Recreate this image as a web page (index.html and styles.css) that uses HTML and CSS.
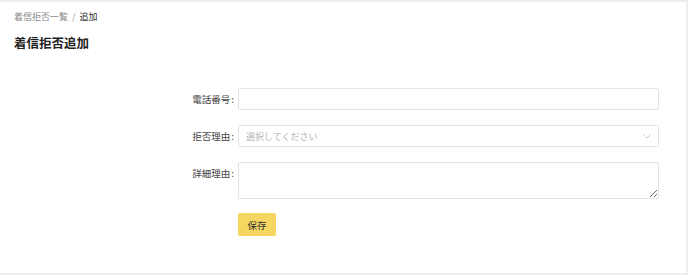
FILE: index.html
```
<!DOCTYPE html>
<html lang="ja">
<head>
    <meta charset="UTF-8">
    <meta name="viewport" content="width=device-width, initial-scale=1.0">
    <title>着信拒否追加</title>
    <link rel="stylesheet" href="styles.css">
</head>
<body>
    <div class="page">
        <div class="breadcrumb">
            <a href="#" class="crumb-link">着信拒否一覧</a>
            <span class="crumb-sep">/</span>
            <span class="crumb-current">追加</span>
        </div>
        <h1 class="page-title">着信拒否追加</h1>

        <form class="block-form">
            <label class="form-label" for="phone">電話番号<span class="colon">:</span></label>
            <input class="form-input" type="text" id="phone" name="phone">

            <label class="form-label" for="reason">拒否理由<span class="colon">:</span></label>
            <div class="select-box">
                <select class="form-input form-select" id="reason" name="reason">
                    <option value="">選択してください</option>
                </select>
                <svg class="select-arrow" width="8" height="5" viewBox="0 0 8 5"><path d="M0.5 0.5 L4 4 L7.5 0.5" fill="none" stroke="#c8c8c8" stroke-width="1"/></svg>
            </div>

            <label class="form-label form-label-top" for="detail">詳細理由<span class="colon">:</span></label>
            <textarea class="form-input form-textarea" id="detail" name="detail"></textarea>

            <span></span>
            <button type="button" class="save-btn">保存</button>
        </form>
    </div>
</body>
</html>
```

FILE: styles.css
```
body {
    margin: 0;
    background: #eeeef2;
    font-family: "Noto Sans CJK JP", "Noto Sans", sans-serif;
    color: #333;
}

.page {
    background: #fff;
    margin: 2px 2px 0 0;
    height: 271px;
    padding: 8px 14px 0 14px;
    box-sizing: border-box;
}

.breadcrumb {
    font-size: 9px;
    line-height: 14px;
}

.crumb-link {
    color: #8a8a8a;
    text-decoration: none;
}

.crumb-sep {
    color: #999;
    margin: 0 2px;
}

.crumb-current {
    color: #333;
}

.page-title {
    font-size: 12.5px;
    font-weight: bold;
    margin: 10px 0 0 0;
    line-height: 18px;
    color: #222;
}

.block-form {
    display: grid;
    grid-template-columns: 220px 1fr;
    column-gap: 4px;
    row-gap: 15px;
    margin: 36px 13px 0 0;
    align-items: center;
}

.form-label {
    text-align: right;
    font-size: 9.5px;
    color: #444;
}

.colon {
    margin-left: 1px;
}

.form-label-top {
    align-self: start;
    padding-top: 4px;
}

.form-input {
    display: block;
    width: 100%;
    box-sizing: border-box;
    height: 22px;
    border: 1px solid #e3e3e3;
    border-radius: 2px;
    background: #fff;
    font-family: inherit;
    font-size: 9px;
    padding: 0 7px;
    outline: none;
}

.select-box {
    position: relative;
}

.form-select {
    appearance: none;
    -webkit-appearance: none;
    color: #b5b5b5;
}

.select-arrow {
    position: absolute;
    right: 8px;
    top: 9px;
}

.form-textarea {
    height: 37px;
    padding: 4px 7px;
}

.save-btn {
    justify-self: start;
    margin-top: -1px;
    background: #f4d660;
    border: none;
    border-radius: 2px;
    width: 38px;
    height: 23px;
    font-family: inherit;
    font-size: 9.5px;
    color: #333;
    padding: 0;
    cursor: pointer;
}
```
